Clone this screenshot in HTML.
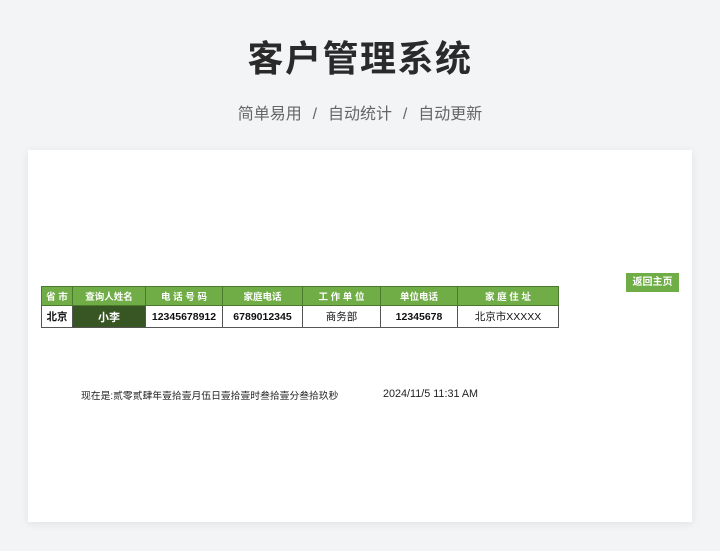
<!DOCTYPE html>
<html><head><meta charset="utf-8"><style>
*{margin:0;padding:0;box-sizing:border-box}
body{width:720px;height:551px;background:#f3f4f6;font-family:"Liberation Sans","Noto Sans CJK SC",sans-serif;position:relative;overflow:hidden}
h1{position:absolute;top:30px;left:0;width:720px;text-align:center;font-size:36px;font-weight:bold;color:#2a2a2a;letter-spacing:1.5px}
.sub{position:absolute;top:100px;left:0;width:720px;text-align:center;font-size:16px;color:#666;word-spacing:1px}
.card{position:absolute;left:28px;top:150px;width:664px;height:372px;background:#fff;box-shadow:0 2px 8px rgba(0,0,0,.08)}
table{position:absolute;left:13px;top:136px;border-collapse:collapse;font-size:10.5px}
td{border:1px solid #555;text-align:center;padding:0}
tr.h td{background:#70ad47;color:#fff;height:19px;font-weight:bold;font-size:9.5px;border-color:#4a7a2e}
tr.d td{height:22px;font-weight:bold;color:#111}
.btn{position:absolute;left:598px;top:123px;width:53px;height:19px;background:#6fad46;color:#fff;font-size:10px;font-weight:bold;text-align:center;line-height:19px}
.t{position:absolute;top:238px;font-size:9.8px;color:#222}
</style></head><body>
<h1>客户管理系统</h1>
<div class="sub">简单易用 &nbsp;/&nbsp; 自动统计 &nbsp;/&nbsp; 自动更新</div>
<div class="card">
<table>
<tr class="h"><td style="width:31px">省 市</td><td style="width:73px">查询人姓名</td><td style="width:77px">电 话 号 码</td><td style="width:80px">家庭电话</td><td style="width:78px">工 作 单 位</td><td style="width:77px">单位电话</td><td style="width:101px">家 庭 住 址</td></tr>
<tr class="d"><td>北京</td><td style="background:#375623;color:#fff;font-size:11px">小李</td><td>12345678912</td><td>6789012345</td><td style="font-weight:normal">商务部</td><td>12345678</td><td style="font-weight:normal">北京市XXXXX</td></tr>
</table>
<div class="btn">返回主页</div>
<div class="t" style="left:53px">现在是:贰零贰肆年壹拾壹月伍日壹拾壹时叁拾壹分叁拾玖秒</div>
<div class="t" style="left:355px;font-size:10.8px;top:238px">2024/11/5 11:31 AM</div>
</div>
</body></html>
